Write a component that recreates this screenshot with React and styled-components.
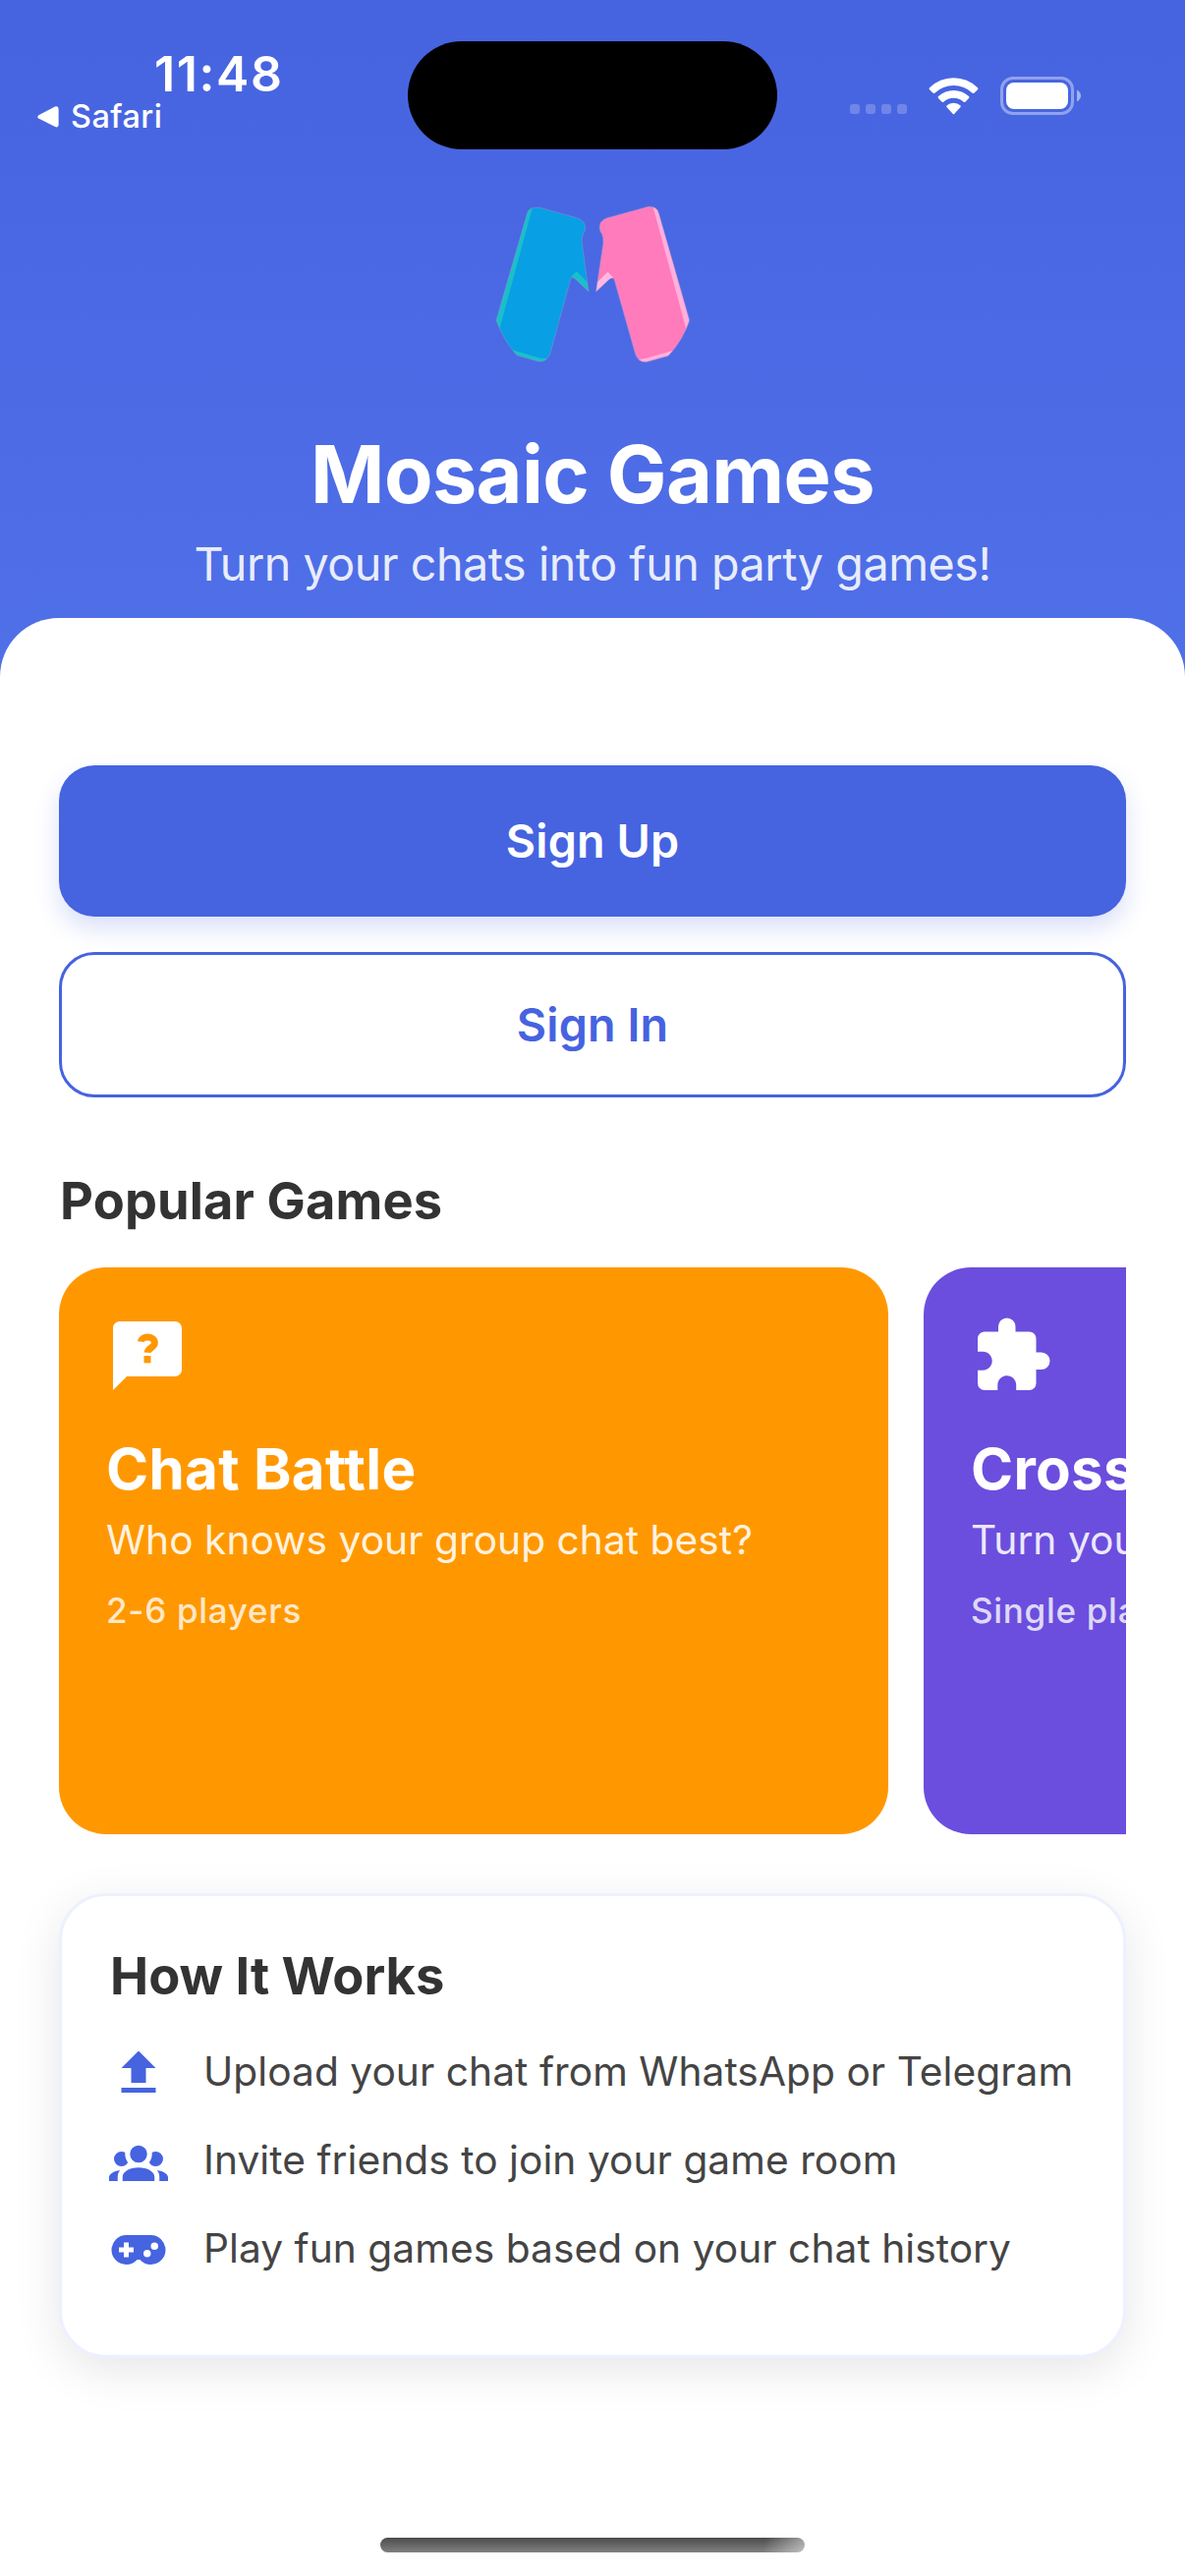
import React from "react";
import styled, { createGlobalStyle } from "styled-components";

const GlobalStyle = createGlobalStyle`
  * { box-sizing: border-box; }
  body {
    margin: 0;
    background: #ffffff;
    font-family: Inter, Roboto, "Liberation Sans", sans-serif;
    -webkit-font-smoothing: antialiased;
  }
  h1, h2, h3, p, ul { margin: 0; padding: 0; }
`;

const Screen = styled.div`
  display: flex;
  flex-direction: column;
  width: 1206px;
  height: 2622px;
  overflow: hidden;
  background: #ffffff;
`;

const Header = styled.header`
  display: flex;
  flex-direction: column;
  align-items: center;
  flex: none;
  height: 689px;
  background: linear-gradient(180deg, #4663e0 0%, #5070e8 100%);
`;

const StatusBar = styled.div`
  display: grid;
  grid-template-columns: 415px 376px 415px;
  width: 100%;
  height: 180px;
  color: #ffffff;
`;

const StatusLeft = styled.div`
  display: flex;
  flex-direction: column;
  padding-top: 45px;
`;

const Clock = styled.div`
  padding-left: 157px;
  font-size: 50px;
  line-height: 60px;
  font-weight: 600;
  letter-spacing: 1.6px;
`;

const BackLink = styled.div`
  display: flex;
  align-items: center;
  gap: 12px;
  margin-top: -6px;
  padding-left: 38px;
  font-size: 32.5px;
  line-height: 40px;
  font-weight: 500;
  letter-spacing: 0.4px;
`;

const Island = styled.div`
  height: 110px;
  margin-top: 42px;
  border-radius: 55px;
  background: #000000;
`;

const StatusRight = styled.div`
  display: flex;
  align-items: flex-end;
  height: 117px;
  padding-left: 74px;
`;

const Dots = styled.div`
  display: flex;
  gap: 6px;
  margin: 0 22px 1px 0;
`;

const Dot = styled.i`
  width: 10px;
  height: 10px;
  border-radius: 3px;
  background: rgba(255, 255, 255, 0.22);
`;

const Wifi = styled.svg`
  margin-right: 22px;
`;

const Logo = styled.svg`
  display: block;
  flex: none;
`;

const AppName = styled.h1`
  margin-top: 42.5px;
  font-size: 81px;
  line-height: 100px;
  font-weight: 700;
  letter-spacing: -0.65px;
  color: #ffffff;
  white-space: nowrap;
`;

const Tagline = styled.p`
  margin-top: 12px;
  font-size: 46.7px;
  line-height: 58px;
  letter-spacing: -0.48px;
  color: rgba(255, 255, 255, 0.9);
  white-space: nowrap;
`;

const Sheet = styled.main`
  display: flex;
  flex-direction: column;
  flex: 1;
  margin-top: -60px;
  padding: 150px 60px 0;
  border-radius: 60px 60px 0 0;
  background: #ffffff;
`;

const Actions = styled.div`
  display: flex;
  flex-direction: column;
  gap: 36px;
`;

const Button = styled.button`
  height: ${(p) => (p.$primary ? 154 : 148)}px;
  border: ${(p) => (p.$primary ? "0" : "3px solid #4663e0")};
  border-radius: 36px;
  background: ${(p) => (p.$primary ? "#4663e0" : "transparent")};
  box-shadow: ${(p) => (p.$primary ? "0 12px 24px rgba(70, 99, 224, 0.2)" : "none")};
  color: ${(p) => (p.$primary ? "#ffffff" : "#4663e0")};
  font: 600 46.7px/58px Inter, Roboto, sans-serif;
  letter-spacing: 0.1px;
`;

const SectionTitle = styled.h2`
  padding-left: 1px;
  font-size: 52.4px;
  line-height: 64px;
  font-weight: 700;
  letter-spacing: ${(p) => p.$tracking}px;
  color: #333333;
`;

const Games = styled.section`
  display: flex;
  flex-direction: column;
  gap: 36px;
  margin-top: 73px;
`;

const Carousel = styled.div`
  display: flex;
  gap: 36px;
  overflow: hidden;
`;

const GameCard = styled.article`
  flex: 0 0 844px;
  height: 577px;
  padding: 48px;
  border-radius: 48px;
  background: ${(p) => p.$color};
  color: #ffffff;
`;

const GameIcon = styled.svg`
  display: block;
  width: 84px;
  height: 84px;
  fill: #ffffff;
`;

const GameName = styled.h3`
  margin-top: 37px;
  font-size: 58.3px;
  line-height: 72px;
  font-weight: 700;
  letter-spacing: 0.3px;
  white-space: nowrap;
`;

const GameText = styled.p`
  margin-top: 12px;
  font-size: 40.7px;
  line-height: 50px;
  letter-spacing: 0.03px;
  color: rgba(255, 255, 255, 0.9);
  white-space: nowrap;
`;

const GamePlayers = styled.p`
  margin-top: 25px;
  font-size: 35px;
  line-height: 42px;
  font-weight: 500;
  letter-spacing: 0.7px;
  color: rgba(255, 255, 255, 0.8);
  white-space: nowrap;
`;

const HowCard = styled.section`
  height: 473px;
  margin-top: 60px;
  padding: 49px 48px 0;
  border: 3px solid #edf0fe;
  border-radius: 48px;
  background: #ffffff;
  box-shadow: 0 12px 48px rgba(0, 0, 0, 0.1);
`;

const Steps = styled.ul`
  display: flex;
  flex-direction: column;
  gap: 30px;
  margin-top: 37px;
  list-style: none;
`;

const Step = styled.li`
  display: flex;
  align-items: center;
  gap: 36px;
  height: 60px;
`;

const StepIcon = styled.svg`
  flex: none;
  width: 60px;
  height: 60px;
  fill: #4663e0;
`;

const StepText = styled.span`
  padding-bottom: 3px;
  font-size: 40.7px;
  line-height: 50px;
  letter-spacing: 0.04px;
  color: #444444;
  white-space: nowrap;
`;

const HomeIndicator = styled.div`
  align-self: center;
  flex: none;
  width: 432px;
  height: 15px;
  margin-top: 183px;
  border-radius: 7.5px;
  background: linear-gradient(105deg, rgba(255, 255, 255, 0) 90%, rgba(255, 255, 255, 0.5) 100%),
    linear-gradient(180deg, #4c4c4c, #808080);
`;

const games = [
  {
    name: "Chat Battle",
    text: "Who knows your group chat best?",
    players: "2-6 players",
    color: "#ff9800",
    icon: (
      <>
        <path d="M20 2H4C2.9 2 2 2.9 2 4V22L6 18H20C21.1 18 22 17.1 22 16V4C22 2.9 21.1 2 20 2Z" />
        <path
          d="M10.1 7.9C10.2 7.1 11 6.6 12.1 6.6C13.3 6.6 14.1 7.3 14.1 8.3C14.1 9.6 12.1 9.7 12 11.1"
          fill="none"
          stroke="#ff9800"
          strokeWidth="2"
        />
        <rect x="11" y="12" width="2" height="2.1" fill="#ff9800" />
      </>
    ),
  },
  {
    name: "Crossword",
    text: "Turn your chat into a crossword",
    players: "Single player",
    color: "#6b4ede",
    icon: (
      <path d="M20.5 11H19V7C19 5.89 18.1 5 17 5H13V3.5A2.5 2.5 0 0 0 10.5 1A2.5 2.5 0 0 0 8 3.5V5H4A2 2 0 0 0 2 7V10.8H3.5C5 10.8 6.2 12 6.2 13.5C6.2 15 5 16.2 3.5 16.2H2V20A2 2 0 0 0 4 22H7.8V20.5C7.8 19 9 17.8 10.5 17.8C12 17.8 13.2 19 13.2 20.5V22H17A2 2 0 0 0 19 20V16H20.5A2.5 2.5 0 0 0 23 13.5A2.5 2.5 0 0 0 20.5 11Z" />
    ),
  },
];

const steps = [
  {
    text: "Upload your chat from WhatsApp or Telegram",
    path: "M9 16V10H5L12 3L19 10H15V16H9M5 20V18H19V20H5Z",
  },
  {
    text: "Invite friends to join your game room",
    path: "M12 5.5A3.5 3.5 0 0 1 15.5 9A3.5 3.5 0 0 1 12 12.5A3.5 3.5 0 0 1 8.5 9A3.5 3.5 0 0 1 12 5.5M5 8C5.56 8 6.08 8.15 6.53 8.42C6.38 9.85 6.8 11.27 7.66 12.38C7.16 13.34 6.16 14 5 14A3 3 0 0 1 2 11A3 3 0 0 1 5 8M19 8A3 3 0 0 1 22 11A3 3 0 0 1 19 14C17.84 14 16.84 13.34 16.34 12.38C17.2 11.27 17.62 9.85 17.47 8.42C17.92 8.15 18.44 8 19 8M5.5 18.25C5.5 16.18 8.41 14.5 12 14.5C15.59 14.5 18.5 16.18 18.5 18.25V20H5.5V18.25M0 20V18.5C0 17.11 1.89 15.94 4.45 15.6C3.86 16.28 3.5 17.22 3.5 18.25V20H0M24 20H20.5V18.25C20.5 17.22 20.14 16.28 19.55 15.6C22.11 15.94 24 17.11 24 18.5V20Z",
  },
  {
    text: "Play fun games based on your chat history",
    path: "M7 6H17A6 6 0 0 1 23 12A6 6 0 0 1 17 18C15.22 18 13.63 17.23 12.53 16H11.47C10.37 17.23 8.78 18 7 18A6 6 0 0 1 1 12A6 6 0 0 1 7 6M6 9V11H4V13H6V15H8V13H10V11H8V9H6M15.5 12A1.5 1.5 0 0 0 14 13.5A1.5 1.5 0 0 0 15.5 15A1.5 1.5 0 0 0 17 13.5A1.5 1.5 0 0 0 15.5 12M18.5 9A1.5 1.5 0 0 0 17 10.5A1.5 1.5 0 0 0 18.5 12A1.5 1.5 0 0 0 20 10.5A1.5 1.5 0 0 0 18.5 9Z",
  },
];

const BLUE_HALF =
  "M170 111Q175 92 202 94Q212 94 222 98L320 125Q348 133 347 158Q346 166 341 173Q335 186 337 202L357 350L317 312Q306 303 302 313L241 535Q233 568 202 563L138 545Q98 500 75 438Z";
const PINK_HALF =
  "M571 111Q566 90 540 91L413 126Q388 134 391 160Q393 168 398 175Q403 186 402 202L380 350L420 313Q432 304 436 315L499 538Q507 568 535 565L600 547Q645 500 665 438Z";

function MosaicLogo() {
  return (
    <Logo width="252" height="210" viewBox="-9 0 756 630">
      <defs>
        <clipPath id="blueHalf">
          <path d={BLUE_HALF} />
        </clipPath>
        <clipPath id="pinkHalf">
          <path d={PINK_HALF} />
        </clipPath>
      </defs>
      <g clipPath="url(#blueHalf)">
        <path d={BLUE_HALF} fill="#089fe5" />
        <path d="M180 84L74 475" stroke="#1bbfca" strokeWidth="16" />
        <path d="M312 297L365 350" stroke="#1bbfca" strokeWidth="24" />
        <path d="M110 530L205 558L245 562" stroke="#1bbfca" strokeWidth="11" fill="none" />
      </g>
      <g clipPath="url(#pinkHalf)">
        <path d={PINK_HALF} fill="#ff7bbb" />
        <path d="M560 84L666 475" stroke="#ffb0dc" strokeWidth="16" />
        <path d="M424 299L372 350" stroke="#ffb9e0" strokeWidth="24" />
        <path d="M500 566L530 560L630 532" stroke="#ffb0dc" strokeWidth="11" fill="none" />
      </g>
      <path d={BLUE_HALF} fill="none" stroke="#7f9cc4" strokeWidth="2" strokeOpacity="0.8" />
      <path d={PINK_HALF} fill="none" stroke="#c79bd0" strokeWidth="2" strokeOpacity="0.8" />
    </Logo>
  );
}

export default function App() {
  return (
    <Screen>
      <GlobalStyle />
      <Header>
        <StatusBar>
          <StatusLeft>
            <Clock>11:48</Clock>
            <BackLink>
              <svg width="22" height="22" viewBox="0 0 22 22" fill="#ffffff">
                <path d="M1.3 9.2L18 .6Q21.6 -.6 21.6 3V19Q21.6 22.4 18 21L1.3 12.6Q-.8 11 1.3 9.2Z" />
              </svg>
              <span>Safari</span>
            </BackLink>
          </StatusLeft>
          <Island />
          <StatusRight>
            <Dots>
              <Dot />
              <Dot />
              <Dot />
              <Dot />
            </Dots>
            <Wifi width="51" height="38" viewBox="0 0 153 114" fill="#ffffff">
              <path d="M3 31Q34 1 76.500 1Q119 1 150 31Q153 34 150 37L139 47Q137 49 134 47Q109 24 76.500 24Q44 24 19 47Q16 49 14 47L3 37Q0 34 3 31Z" />
              <path d="M30 57Q50 39 76.500 39Q103 39 123 57Q126 60 123 63L112 74Q110 76 107 74Q94 62 76.500 62Q59 62 46 74Q43 76 41 74L30 63Q27 60 30 57Z" />
              <path d="M56 85Q64 77 76.500 77Q89 77 97 85Q100 88 97 91L79 110Q76.500 113 74 110L56 91Q53 88 56 85Z" />
            </Wifi>
            <svg width="83" height="39" viewBox="0 0 83 39">
              <rect x="1.500" y="1.500" width="72" height="36" rx="11.500" fill="none" stroke="#ffffff" strokeOpacity="0.4" strokeWidth="3" />
              <rect x="6" y="6" width="63" height="27" rx="8" fill="#ffffff" />
              <path d="M78 13.500Q82 16 82 19.500Q82 23 78 25.500Z" fill="#ffffff" fillOpacity="0.5" />
            </svg>
          </StatusRight>
        </StatusBar>
        <MosaicLogo />
        <AppName>Mosaic Games</AppName>
        <Tagline>Turn your chats into fun party games!</Tagline>
      </Header>
      <Sheet>
        <Actions>
          <Button $primary>Sign Up</Button>
          <Button>Sign In</Button>
        </Actions>
        <Games>
          <SectionTitle $tracking={0.12}>Popular Games</SectionTitle>
          <Carousel>
            {games.map((game) => (
              <GameCard key={game.name} $color={game.color}>
                <GameIcon viewBox="0 0 24 24">{game.icon}</GameIcon>
                <GameName>{game.name}</GameName>
                <GameText>{game.text}</GameText>
                <GamePlayers>{game.players}</GamePlayers>
              </GameCard>
            ))}
          </Carousel>
        </Games>
        <HowCard>
          <SectionTitle $tracking={0}>How It Works</SectionTitle>
          <Steps>
            {steps.map((step) => (
              <Step key={step.text}>
                <StepIcon viewBox="0 0 24 24">
                  <path d={step.path} />
                </StepIcon>
                <StepText>{step.text}</StepText>
              </Step>
            ))}
          </Steps>
        </HowCard>
        <HomeIndicator />
      </Sheet>
    </Screen>
  );
}
